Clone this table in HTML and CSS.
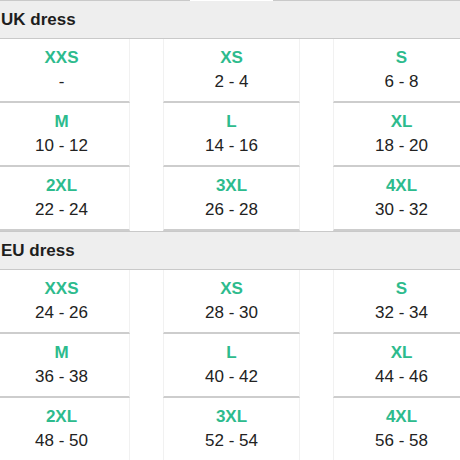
FILE: index.html
```html
<!DOCTYPE html>
<html>
<head>
<meta charset="utf-8">
<link rel="stylesheet" href="styles.css">
</head>
<body>
<div class="wrap">
  <section class="group">
    <div class="head head-first">UK dress</div>
    <div class="grid">
      <div class="cell"><div class="size">XXS</div><div class="val">-</div></div>
      <div class="cell"><div class="size">XS</div><div class="val">2 - 4</div></div>
      <div class="cell"><div class="size">S</div><div class="val">6 - 8</div></div>
      <div class="cell"><div class="size">M</div><div class="val">10 - 12</div></div>
      <div class="cell"><div class="size">L</div><div class="val">14 - 16</div></div>
      <div class="cell"><div class="size">XL</div><div class="val">18 - 20</div></div>
      <div class="cell"><div class="size">2XL</div><div class="val">22 - 24</div></div>
      <div class="cell"><div class="size">3XL</div><div class="val">26 - 28</div></div>
      <div class="cell"><div class="size">4XL</div><div class="val">30 - 32</div></div>
    </div>
  </section>
  <section class="group">
    <div class="head">EU dress</div>
    <div class="grid">
      <div class="cell"><div class="size">XXS</div><div class="val">24 - 26</div></div>
      <div class="cell"><div class="size">XS</div><div class="val">28 - 30</div></div>
      <div class="cell"><div class="size">S</div><div class="val">32 - 34</div></div>
      <div class="cell"><div class="size">M</div><div class="val">36 - 38</div></div>
      <div class="cell"><div class="size">L</div><div class="val">40 - 42</div></div>
      <div class="cell"><div class="size">XL</div><div class="val">44 - 46</div></div>
      <div class="cell"><div class="size">2XL</div><div class="val">48 - 50</div></div>
      <div class="cell"><div class="size">3XL</div><div class="val">52 - 54</div></div>
      <div class="cell"><div class="size">4XL</div><div class="val">56 - 58</div></div>
    </div>
  </section>
</div>
</body>
</html>
```

FILE: styles.css
```css
html, body {
  margin: 0;
  padding: 0;
  background: #fff;
  overflow: hidden;
}
body {
  width: 460px;
  height: 460px;
  font-family: "Liberation Sans", Arial, sans-serif;
  color: #222;
}
.wrap {
  margin-left: -7px;
  width: 477px;
}
.head {
  position: relative;
  height: 37px;
  line-height: 37px;
  background: #eee;
  border-top: 1px solid #c9c9c9;
  border-bottom: 1px solid #c9c9c9;
  padding-left: 8px;
  font-size: 17px;
  font-weight: bold;
  color: #1e1e1e;
}
.head-first::before {
  content: "";
  position: absolute;
  top: -1px;
  left: 197px;
  width: 83px;
  height: 1px;
  background: #fff;
}
.grid {
  display: grid;
  grid-template-columns: repeat(3, 137px);
  column-gap: 33px;
}
.cell {
  box-sizing: border-box;
  height: 64px;
  padding: 7px 0;
  text-align: center;
  font-size: 17px;
  line-height: 24px;
  border-left: 1px solid #f1f1f1;
  border-right: 1px solid #f1f1f1;
  border-bottom: 2px solid #cdcdcd;
}
.size {
  color: #2dbb8d;
  font-weight: bold;
}
.val {
  color: #222;
}
```
